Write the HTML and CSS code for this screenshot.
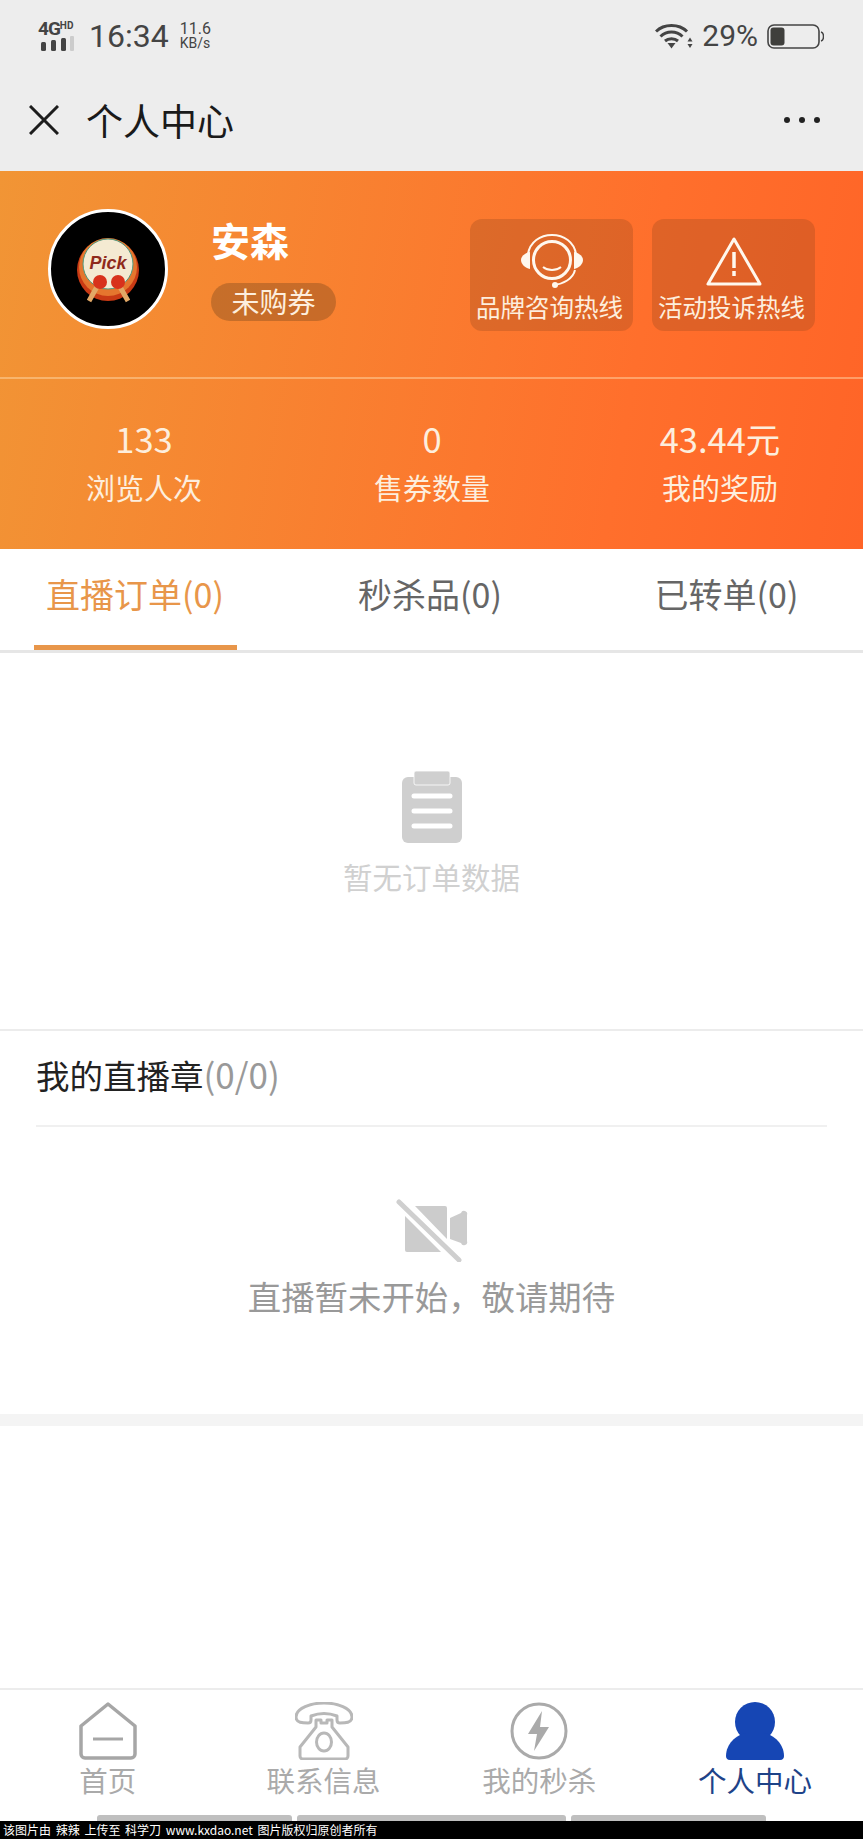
FILE: index.html
```html
<!DOCTYPE html>
<html lang="zh">
<head>
<meta charset="utf-8">
<title>个人中心</title>
<link rel="stylesheet" href="styles.css">
</head>
<body>
<div class="page">
  <div class="chrome">
    <div class="status">
      <div class="status-left">
        <div class="net">
          <div class="net-top"><span class="net-4g">4G</span><span class="net-hd">HD</span></div>
          <svg class="net-bars" width="36" height="15" viewBox="0 0 36 15"><rect x="3" y="6" width="5" height="9" rx="1.500" fill="#444"/><rect x="13" y="4" width="5" height="11" rx="1.500" fill="#444"/><rect x="23" y="2" width="5" height="13" rx="1.500" fill="#444"/><rect x="32" y="0" width="4" height="15" rx="1" fill="#ccc"/></svg>
        </div>
        <span class="clock">16:34</span>
        <div class="speed"><span>11.6</span><span class="speed-unit">KB/s</span></div>
      </div>
      <div class="status-right">
        <svg class="wifi" width="38" height="26" viewBox="0 0 38 26" fill="none" stroke="#444" stroke-width="3"><path d="M1 8.500C9 .5 24 .5 32 8.500"/><path d="M5.500 13.500C11.500 7.500 21.500 7.500 27.500 13.500"/><path d="M10 18C13.500 15 19.500 15 23 18"/><path d="M12.500 20h8l-4 5.500z" fill="#444" stroke="none"/><path d="M35 14.500l2.500 4h-5zM35 25l2.500-4h-5z" fill="#444" stroke="none"/></svg>
        <span class="percent">29%</span>
        <svg class="battery" width="57" height="25" viewBox="0 0 57 25"><rect x="1" y="1" width="51" height="23" rx="6" fill="none" stroke="#444" stroke-width="1.600"/><rect x="3.500" y="3.500" width="14" height="18" rx="3" fill="#3f3f3c"/><path d="M54 8c2 .5 2.500 2.500 2.500 4.500s-.5 4-2.500 4.500" fill="none" stroke="#444" stroke-width="1.500"/></svg>
      </div>
    </div>
    <div class="titlebar">
      <svg class="close" width="30" height="30" viewBox="0 0 30 30" stroke="#1c1c1c" stroke-width="3" fill="none"><path d="M1 1l28 28M29 1L1 29"/></svg>
      <span class="title">个人中心</span>
      <div class="dots"><i></i><i></i><i></i></div>
    </div>
  </div>

  <div class="hero">
    <div class="profile">
      <svg class="avatar" width="120" height="120" viewBox="0 0 120 120">
        <circle cx="60" cy="60" r="58.500" fill="#000" stroke="#fff" stroke-width="3"/>
        <circle cx="60" cy="61" r="31" fill="#c93a14"/>
        <circle cx="60" cy="58" r="29" fill="#e5762e"/>
        <circle cx="60" cy="55" r="25" fill="#f4ead2" stroke="#4f9a80" stroke-width="1"/>
        <path d="M50 76L41 92M71 76L80 92" stroke="#e2a866" stroke-width="5"/>
        <circle cx="52" cy="73" r="7" fill="#d8321c"/>
        <circle cx="70" cy="73" r="7" fill="#d8321c"/>
        <text x="60" y="60" class="pick">Pick</text>
      </svg>
      <div class="who">
        <div class="name">安森</div>
        <div class="pill">未购券</div>
      </div>
      <div class="hotlines">
        <div class="hotline">
          <svg width="64" height="54" viewBox="0 0 64 54" fill="none" stroke="#fff8ee" stroke-width="2.500"><circle cx="32" cy="26" r="18.500" stroke-width="3"/><path d="M8 20C10 8 20 1 32 1s22 7 24 19" stroke-width="2"/><path d="M10 18c-5 1-9 4-9 8s4 8 9 9z" fill="#fff8ee" stroke="none"/><path d="M54 18c5 1 9 4 9 8s-4 8-9 9z" fill="#fff8ee" stroke="none"/><path d="M23 33c5 4 13 4 18 0" stroke-width="2"/><path d="M55 36c-2 9-12 14-21 15" stroke-width="2"/><circle cx="35" cy="51" r="3" fill="#fff8ee" stroke="none"/></svg>
          <span>品牌咨询热线</span>
        </div>
        <div class="hotline">
          <svg width="56" height="54" viewBox="0 0 56 54" fill="none" stroke="#fff8ee" stroke-width="3" stroke-linejoin="round"><path d="M28 5L2 50h52z"/><path d="M28 18v16" stroke-width="3.500"/><path d="M28 37v5" stroke-width="3.500"/></svg>
          <span>活动投诉热线</span>
        </div>
      </div>
    </div>
    <div class="stats">
      <div class="stat"><b>133</b><span>浏览人次</span></div>
      <div class="stat"><b>0</b><span>售券数量</span></div>
      <div class="stat"><b>43.44元</b><span>我的奖励</span></div>
    </div>
  </div>

  <div class="tabs">
    <div class="tab tab-active">直播订单(0)</div>
    <div class="tab">秒杀品(0)</div>
    <div class="tab">已转单(0)</div>
  </div>

  <div class="orders">
    <svg width="60" height="72" viewBox="0 0 60 72"><path d="M6 6h48a6 6 0 0 1 6 6v54a6 6 0 0 1-6 6H6a6 6 0 0 1-6-6V12a6 6 0 0 1 6-6z" fill="#cfcfcf"/><path d="M14 0h32a2 2 0 0 1 2 2v10a2 2 0 0 1-2 2H14a2 2 0 0 1-2-2V2a2 2 0 0 1 2-2z" fill="#cfcfcf" stroke="#fff" stroke-width=".8"/><g stroke="#fff" stroke-width="5" stroke-linecap="round"><path d="M12 25h36M12 40h36M12 55h36"/></g></svg>
    <p>暂无订单数据</p>
  </div>

  <div class="seal">
    <div class="seal-head">我的直播章<span>(0/0)</span></div>
    <div class="seal-body">
      <svg width="72" height="64" viewBox="0 0 72 64"><path d="M19 8h30a2 2 0 0 1 2 2v31zM9 18l36 36H11a2 2 0 0 1-2-2zM54 20l11-5a3 3 0 0 1 6 2v26a3 3 0 0 1-6 2l-11-4z" fill="#cccccc"/><path d="M3 4l60 58" stroke="#cfcfcf" stroke-width="5" stroke-linecap="round"/></svg>
      <p>直播暂未开始，敬请期待</p>
    </div>
  </div>
  <div class="band"></div>
  <div class="spacer"></div>

  <nav class="nav">
    <div class="nav-item">
      <svg width="58" height="58" viewBox="0 0 58 58" fill="none" stroke="#a6a6a6" stroke-width="3.500" stroke-linejoin="round"><path d="M29 2L56 24v28a4 4 0 0 1-4 4H6a4 4 0 0 1-4-4V24z"/><path d="M14 37h30" stroke-width="3"/></svg>
      <span>首页</span>
    </div>
    <div class="nav-item">
      <svg width="58" height="58" viewBox="0 0 58 58" fill="none" stroke="#b8b8b8" stroke-width="3" stroke-linejoin="round"><path d="M13 21c-5 0-12 0-12-6C1 6 16 1 29 1s28 5 28 14c0 6-7 6-12 6-2 0-3-1-3-3v-4c-8-3-18-3-26 0v4c0 2-1 3-3 3z"/><path d="M21 25v-7h5v3h6v-3h5v7l16 20v9a3 3 0 0 1-3 3H8a3 3 0 0 1-3-3v-9z"/><ellipse cx="29" cy="40" rx="7.500" ry="9"/></svg>
      <span>联系信息</span>
    </div>
    <div class="nav-item">
      <svg width="58" height="58" viewBox="0 0 58 58" fill="none"><circle cx="29" cy="29" r="27" stroke="#aaa" stroke-width="3"/><path d="M32 9L18 32h9l-3 17 15-24h-9z" fill="#aaa"/></svg>
      <span>我的秒杀</span>
    </div>
    <div class="nav-item nav-active">
      <svg width="58" height="58" viewBox="0 0 58 58" fill="#1646b4"><circle cx="29" cy="20" r="20"/><path d="M0 54C0 42 10 33 20 31h18c10 2 20 11 20 23 0 2-1 4-4 4H4c-3 0-4-2-4-4z"/></svg>
      <span>个人中心</span>
    </div>
  </nav>
  <div class="home-bars"><i class="bar-a"></i><i class="bar-b"></i><i class="bar-a"></i></div>
  <div class="credit">该图片由 辣辣 上传至 科学刀 www.kxdao.net 图片版权归原创者所有</div>
</div>
</body>
</html>
```
FILE: styles.css
```css
* { box-sizing: border-box; }
html, body { margin: 0; padding: 0; background: #fff; }
body { font-family: "Noto Sans CJK SC", "Noto Sans", sans-serif; }
p { margin: 0; }
.page { width: 863px; height: 1839px; display: flex; flex-direction: column; overflow: hidden; }

.chrome { height: 171px; background: #ededed; display: flex; flex-direction: column; flex: none; }
.status { height: 68px; padding: 18px 39px 0 38px; display: flex; justify-content: space-between; align-items: flex-start; color: #444; font-family: Roboto, "Liberation Sans", sans-serif; }
.status-left { display: flex; align-items: center; gap: 11px; }
.net { width: 40px; display: flex; flex-direction: column; }
.net-top { display: flex; align-items: flex-start; height: 15px; line-height: 15px; font-weight: 700; }
.net-4g { font-size: 19px; letter-spacing: -1px; }
.net-hd { font-size: 10px; line-height: 10px; }
.net-bars { display: block; margin-top: 0; }
.clock { font-size: 32px; line-height: 36px; }
.speed { display: flex; flex-direction: column; font-size: 16px; line-height: 15px; }
.speed-unit { font-size: 14px; }
.status-right { display: flex; align-items: center; gap: 9px; height: 32px; margin-top: 2px; }
.percent { font-size: 30px; line-height: 32px; }
.wifi { margin-left: -3px; }
.titlebar { flex: 1; display: flex; align-items: center; padding: 0 43px 0 29px; }
.title { font-size: 37px; line-height: 44px; color: #1a1a1a; margin-left: 27px; }
.dots { margin-left: auto; display: flex; gap: 9px; }
.dots i { width: 6px; height: 6px; border-radius: 50%; background: #222; display: block; }

.hero { height: 378px; flex: none; background: linear-gradient(100deg, #f19535 0%, #ff6f2c 72%, #ff6427 100%); color: #fff; display: flex; flex-direction: column; }
.profile { height: 208px; flex: none; display: flex; align-items: flex-start; padding: 38px 48px 0; border-bottom: 2px solid rgba(255, 225, 180, .45); }
.avatar { flex: none; }
.who { margin-left: 43px; padding-top: 2px; display: flex; flex-direction: column; align-items: flex-start; gap: 16px; }
.name { font-size: 39px; line-height: 56px; font-weight: 700; }
.pill { height: 38px; width: 125px; line-height: 36px; text-align: center; border-radius: 19px; background: rgba(120, 70, 30, .38); font-size: 28px; color: #fdeedd; }
.hotlines { margin-left: auto; display: flex; gap: 19px; margin-top: 10px; }
.hotline { width: 163px; height: 112px; border-radius: 12px; background: rgba(140, 70, 30, .28); display: flex; flex-direction: column; align-items: center; padding-top: 15px; color: #fdeedd; }
.hotline svg { height: 54px; flex: none; display: block; }
.hotline span { font-size: 24.500px; line-height: 30px; white-space: nowrap; margin-top: 4px; margin-left: -4px; }
.stats { flex: 1; display: grid; grid-template-columns: repeat(3, 288px); padding-top: 36px; }
.stat { display: flex; flex-direction: column; align-items: center; }
.stat b { font-weight: 400; font-size: 34.500px; line-height: 46px; color: #fdeedd; }
.stat span { font-size: 29px; line-height: 42px; margin-top: 5px; color: #fdeedd; }

.tabs { height: 104px; flex: none; display: grid; grid-template-columns: 270px 320px 273px; border-bottom: 3px solid #e6e6e6; }
.tab { font-size: 34px; color: #666; text-align: center; line-height: 90px; position: relative; height: 101px; }
.tab-active { color: #e8964a; }
.tab-active::after { content: ""; position: absolute; left: 34px; bottom: 0; width: 203px; height: 5px; background: #e8964a; }

.orders { height: 378px; flex: none; display: flex; flex-direction: column; align-items: center; padding-top: 118px; border-bottom: 2px solid #ececec; }
.orders p { font-size: 29.500px; line-height: 44px; color: #d0d0d0; margin-top: 11px; }

.seal { height: 383px; flex: none; display: flex; flex-direction: column; }
.seal-head { margin: 0 36px; height: 96px; line-height: 86px; font-size: 33.500px; color: #222; border-bottom: 2px solid #f0f0f0; }
.seal-head span { color: #999; font-size: 35px; }
.seal-body { flex: 1; display: flex; flex-direction: column; align-items: center; padding-top: 71px; }
.seal-body p { font-size: 33.400px; line-height: 48px; color: #999; margin-top: 10px; }

.band { height: 12px; flex: none; background: #f4f4f4; }
.spacer { flex: 1; }

.nav { height: 127px; flex: none; display: grid; grid-template-columns: repeat(4, 1fr); border-top: 2px solid #ececec; padding-top: 12px; }
.nav-item { display: flex; flex-direction: column; align-items: center; font-size: 28.500px; color: #aaa; }
.nav-item svg { display: block; flex: none; }
.nav-item span { line-height: 40px; white-space: nowrap; }
.nav-active { color: #1e4388; }

.home-bars { height: 6px; flex: none; padding-left: 97px; display: flex; gap: 5px; }
.home-bars i { display: block; height: 6px; background: #bfbfbf; border-radius: 3px 3px 0 0; }
.bar-a { width: 195px; }
.bar-b { width: 269px; }
.credit { height: 18px; flex: none; background: #000; color: #fff; font-size: 12px; line-height: 18px; padding-left: 3px; white-space: pre; word-spacing: 2px; font-family: "Noto Sans CJK SC", "DejaVu Sans", sans-serif; }
.pick { font-family: "Liberation Sans", sans-serif; font-weight: 700; font-style: italic; font-size: 18px; fill: #8f2a1c; text-anchor: middle; }
```
